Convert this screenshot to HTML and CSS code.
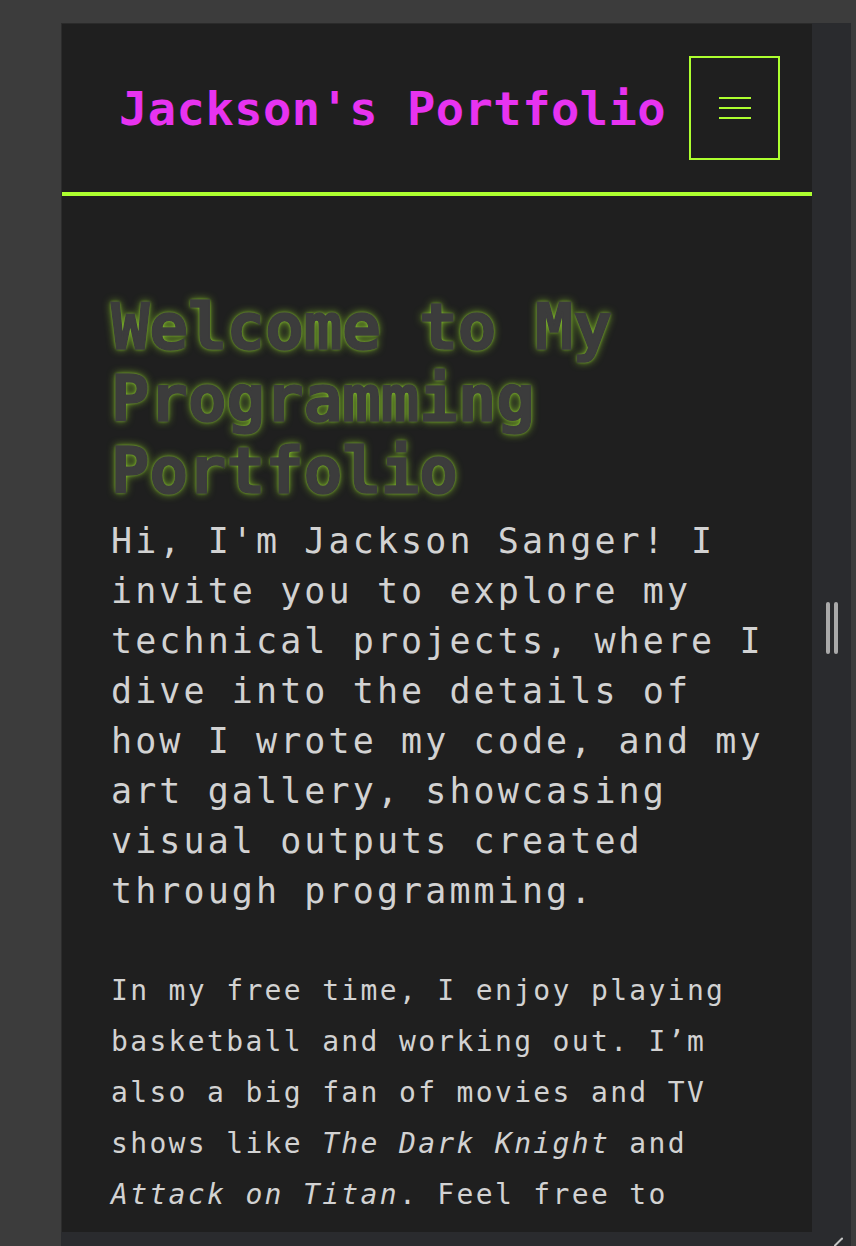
FILE: index.html
```html
<!DOCTYPE html>
<html lang="en">
<head>
<meta charset="utf-8">
<title>Jackson's Portfolio</title>
<link rel="stylesheet" href="styles.css">
</head>
<body>
<div class="frame">
  <div class="viewport">
    <header class="site-header">
      <h1 class="site-title">Jackson's Portfolio</h1>
      <button class="menu-btn" aria-label="Menu">
        <span class="bar"></span>
        <span class="bar"></span>
        <span class="bar"></span>
      </button>
    </header>
    <main class="content">
      <h2 class="hero-title">Welcome to My Programming Portfolio</h2>
      <p class="intro">Hi, I'm Jackson Sanger! I invite you to explore my technical projects, where I dive into the details of how I wrote my code, and my art gallery, showcasing visual outputs created through programming.</p>
      <p class="about">In my free time, I enjoy playing basketball and working out. I’m also a big fan of movies and TV shows like <em>The Dark Knight</em> and <em>Attack on Titan</em>. Feel free to explore my work.</p>
    </main>
  </div>
  <div class="side">
    <div class="handle"><span></span><span></span></div>
  </div>
  <svg class="grip" width="10" height="10" viewBox="0 0 10 10"><line x1="1" y1="9.5" x2="8" y2="2.5" stroke="#c4c4c4" stroke-width="2" stroke-linecap="round"/></svg>
</div>
</body>
</html>
```

FILE: styles.css
```css
html, body {
  margin: 0;
  padding: 0;
}
body {
  background: #3c3c3c;
  height: 1246px;
  overflow: hidden;
  padding: 23px 0 0 61px;
  box-sizing: border-box;
  font-family: "DejaVu Sans Mono", "Liberation Mono", monospace;
}
.frame {
  position: relative;
  width: 790px;
  height: 1223px;
  background: #2a2b2e;
  display: flex;
  align-items: flex-start;
}
.viewport {
  width: 751px;
  height: 1209px;
  box-sizing: border-box;
  background: #1f1f1f;
  border-left: 1px solid #2c2c2c;
  border-top: 1px solid #2a2a2a;
  overflow: hidden;
  flex: none;
}
.side {
  flex: 1;
  height: 1209px;
  display: flex;
  align-items: center;
  justify-content: center;
}
.handle {
  display: flex;
  gap: 4px;
}
.handle span {
  width: 4px;
  height: 52px;
  background: #a9a9a9;
  border-radius: 2px;
}
.grip {
  position: absolute;
  left: 773px;
  bottom: 0;
}
.site-header {
  height: 168px;
  border-bottom: 4px solid #adff2f;
  display: flex;
  align-items: center;
  justify-content: space-between;
  padding: 0 32px 0 57px;
}
.site-title {
  margin: 0;
  font-size: 47px;
  font-weight: bold;
  letter-spacing: 0.5px;
  color: #e733f0;
  line-height: 1;
}
.menu-btn {
  width: 91px;
  height: 104px;
  box-sizing: border-box;
  border: 2px solid #adff2f;
  background: transparent;
  padding: 0;
  display: flex;
  flex-direction: column;
  align-items: center;
  justify-content: center;
  gap: 8px;
  cursor: pointer;
}
.menu-btn .bar {
  display: block;
  width: 32px;
  height: 2px;
  background: #adff2f;
}
.content {
  padding: 95px 41px 0 49px;
  color: #d2d2d2;
}
.hero-title {
  margin: 0;
  font-size: 64px;
  line-height: 72px;
  font-weight: bold;
  color: #3c3c3c;
  -webkit-text-stroke: 1.5px #3c3c3c;
  text-shadow: 0 0 3px rgba(173, 255, 47, 0.85), 0 0 8px rgba(173, 255, 47, 0.7);
}
.intro {
  margin: 9px 0 0;
  font-size: 35px;
  line-height: 50px;
  letter-spacing: 3.1px;
}
.about {
  margin: 49px 0 0;
  font-size: 28px;
  line-height: 51px;
  letter-spacing: 2.34px;
}
.about em {
  font-style: italic;
}
```
